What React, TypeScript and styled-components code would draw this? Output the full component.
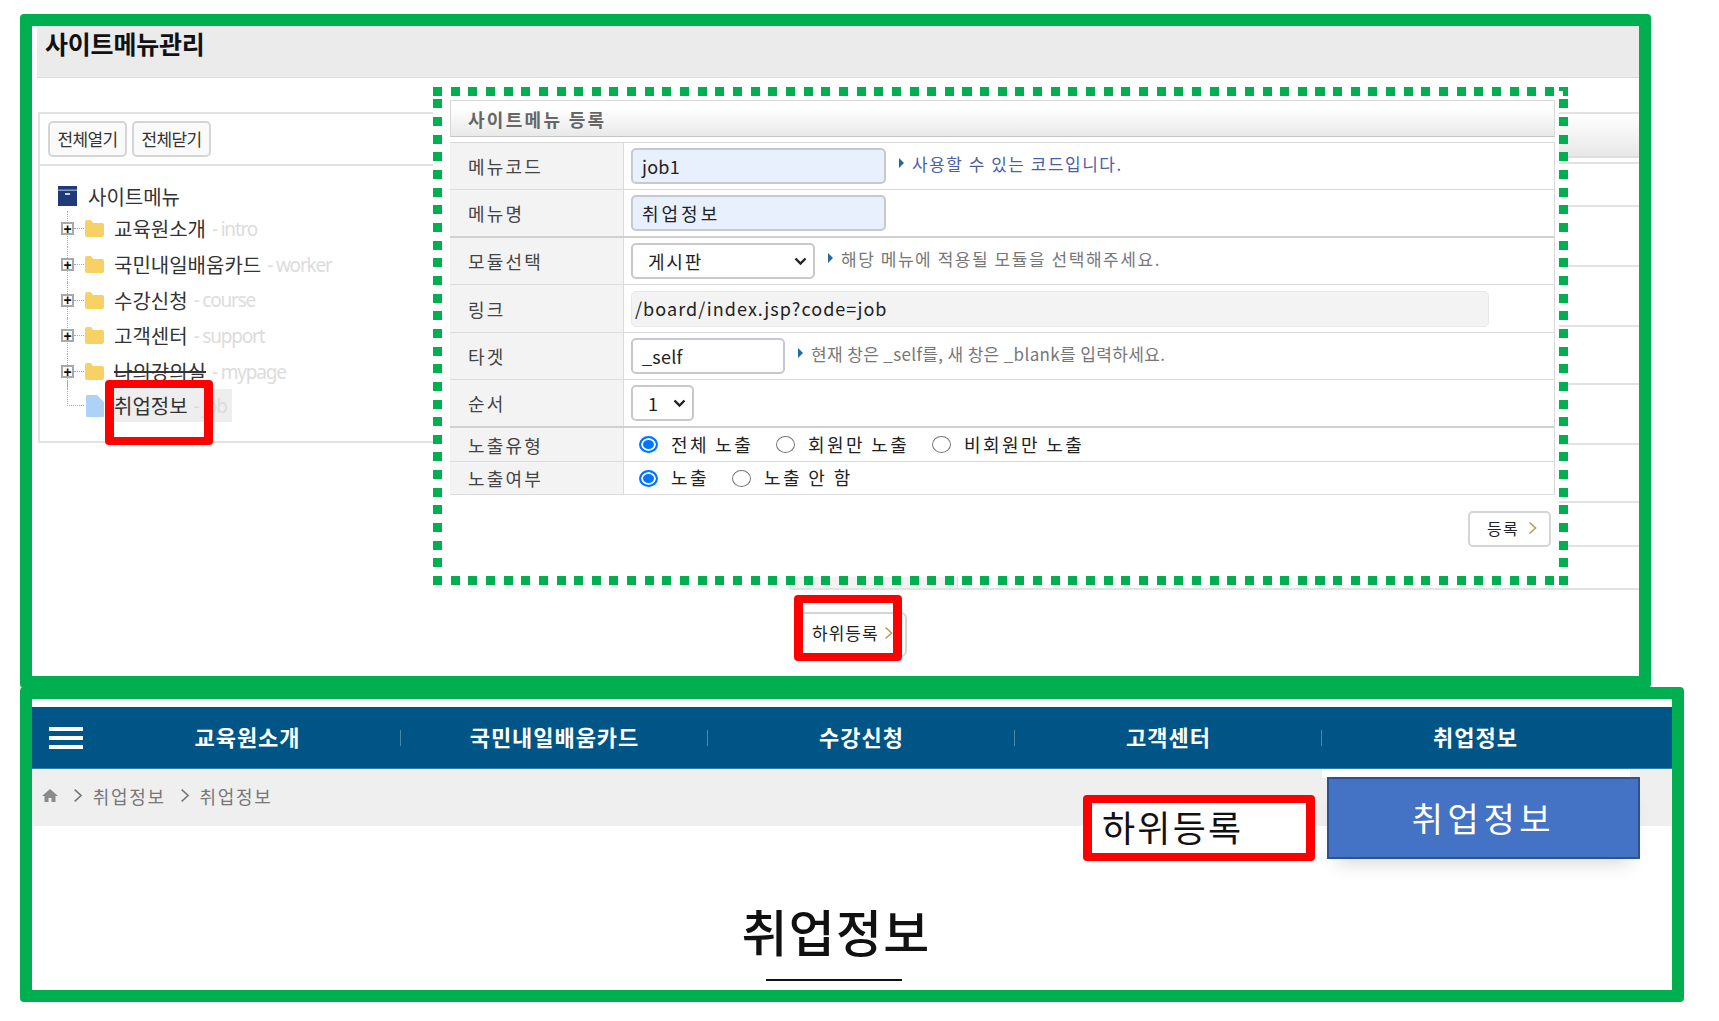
import styled, { createGlobalStyle } from "styled-components";

const GREEN = "#00b050";
const KO = `"Noto Sans CJK KR", "Noto Sans", sans-serif`;

const GlobalStyle = createGlobalStyle`
    html, body {
        margin: 0;
        padding: 0;
        background: #fff;
        font-family: ${KO};
    }
    * { box-sizing: border-box; }
`;

type TreeItem = { name: string; code: string; struck?: boolean };

const treeItems: TreeItem[] = [
    { name: "교육원소개", code: "intro" },
    { name: "국민내일배움카드", code: "worker" },
    { name: "수강신청", code: "course" },
    { name: "고객센터", code: "support" },
    { name: "나의강의실", code: "mypage", struck: true },
];

const navItems = ["교육원소개", "국민내일배움카드", "수강신청", "고객센터", "취업정보"];

const Chevron = ({ color = "#b59a55", size = 14 }: { color?: string; size?: number }) => (
    <svg width={size * 0.65} height={size} viewBox="0 0 9 14" fill="none">
        <path d="M1.5 1.5 L7.5 7 L1.5 12.5" stroke={color} strokeWidth="1.5" />
    </svg>
);

const SelectArrow = () => (
    <svg width="13" height="9" viewBox="0 0 13 9" fill="none">
        <path d="M1.5 1.5 L6.5 6.5 L11.5 1.5" stroke="#222" strokeWidth="2.4" />
    </svg>
);

const FolderIcon = () => (
    <svg width="19" height="17" viewBox="0 0 19 17">
        <path d="M0 2 Q0 0 2 0 H6 L8 3 H17 Q19 3 19 5 V15 Q19 17 17 17 H2 Q0 17 0 15 Z" fill="#f7d163" />
    </svg>
);

const PageIcon = () => (
    <svg width="18" height="22" viewBox="0 0 18 22">
        <path d="M0 1 Q0 0 1 0 H11 L18 7 V21 Q18 22 17 22 H1 Q0 22 0 21 Z" fill="#aed2f7" />
    </svg>
);

const ArchiveIcon = () => (
    <svg width="19" height="20" viewBox="0 0 19 20">
        <rect x="0" y="0" width="19" height="20" fill="#1f3a78" />
        <rect x="0" y="3.5" width="19" height="1.4" fill="#8fa1c6" />
        <rect x="7" y="7" width="5" height="2" fill="#c9d2e6" />
    </svg>
);

const HomeIcon = () => (
    <svg width="16" height="13" viewBox="0 0 16 13">
        <path d="M8 0 L16 7 H13.5 V13 H9.5 V9 H6.5 V13 H2.5 V7 H0 Z" fill="#8b8b8b" />
    </svg>
);

const Radio = ({ on }: { on?: boolean }) => <RadioMark $on={on} />;

const App = () => {
    return (
        <Page>
            <GlobalStyle />
            <AdminFrame>
                <PageHead>
                    <PageTitle>사이트메뉴관리</PageTitle>
                </PageHead>

                <Workspace>
                    <TreePanel>
                        <TreeToolbar>
                            <ToolButton>전체열기</ToolButton>
                            <ToolButton>전체닫기</ToolButton>
                        </TreeToolbar>
                        <TreeBody>
                            <TreeRoot>
                                <ArchiveIcon />
                                <RootName>사이트메뉴</RootName>
                            </TreeRoot>
                            {treeItems.map((item) => (
                                <TreeRow key={item.code}>
                                    <Expander>+</Expander>
                                    <Dots />
                                    <FolderIcon />
                                    <TreeName $struck={item.struck}>{item.name}</TreeName>
                                    <TreeCode>- {item.code}</TreeCode>
                                </TreeRow>
                            ))}
                            <TreeLeaf>
                                <LeafDots />
                                <PageIcon />
                                <LeafLabel>
                                    <TreeName>취업정보</TreeName>
                                    <TreeCode>- job</TreeCode>
                                </LeafLabel>
                            </TreeLeaf>
                        </TreeBody>
                    </TreePanel>

                    <DetailPanel>
                        <DetailHead />
                        <DetailRow $h={6} />
                        <DetailRow $h={43} />
                        <DetailRow $h={60} />
                        <DetailRow $h={60} />
                        <DetailRow $h={58} />
                        <DetailRow $h={60} />
                        <DetailRow $h={58} />
                        <DetailRow $h={44} />
                        <DetailRow $h={43}>
                            <DetailLabel>노출여부</DetailLabel>
                            <DetailValue>
                                <Radio on />
                                <RadioText>노출</RadioText>
                                <Radio />
                                <RadioText>노출 안 함</RadioText>
                            </DetailValue>
                        </DetailRow>
                    </DetailPanel>
                </Workspace>

                <LowerActions>
                    <ActionButton>
                        하위등록 <Chevron />
                    </ActionButton>
                </LowerActions>

                <FormOverlay>
                    <DashEdge />
                    <FormHead>사이트메뉴 등록</FormHead>
                    <FormTable>
                        <FormRow $h={47}>
                            <FormLabel>메뉴코드</FormLabel>
                            <FormCell>
                                <TextBox $w={255} $filled>job1</TextBox>
                                <Hint $blue $ls={1.5}>사용할 수 있는 코드입니다.</Hint>
                            </FormCell>
                        </FormRow>
                        <FormRow $h={48} $thick>
                            <FormLabel>메뉴명</FormLabel>
                            <FormCell>
                                <TextBox $w={255} $filled $ls={3}>취업정보</TextBox>
                            </FormCell>
                        </FormRow>
                        <FormRow $h={47}>
                            <FormLabel>모듈선택</FormLabel>
                            <FormCell>
                                <SelectBox $w={184} $ls={1.8}>
                                    게시판
                                    <SelectArrow />
                                </SelectBox>
                                <Hint $ls={1.55}>해당 메뉴에 적용될 모듈을 선택해주세요.</Hint>
                            </FormCell>
                        </FormRow>
                        <FormRow $h={48}>
                            <FormLabel>링크</FormLabel>
                            <FormCell>
                                <TextBox $w={858} $muted $ls={1.05}>/board/index.jsp?code=job</TextBox>
                            </FormCell>
                        </FormRow>
                        <FormRow $h={47}>
                            <FormLabel>타겟</FormLabel>
                            <FormCell>
                                <TextBox $w={154}>_self</TextBox>
                                <Hint $ls={0.35}>현재 창은 _self를, 새 창은 _blank를 입력하세요.</Hint>
                            </FormCell>
                        </FormRow>
                        <FormRow $h={48} $thick>
                            <FormLabel>순서</FormLabel>
                            <FormCell>
                                <SelectBox $w={63}>
                                    1
                                    <SelectArrow />
                                </SelectBox>
                            </FormCell>
                        </FormRow>
                        <FormRow $h={34}>
                            <FormLabel>노출유형</FormLabel>
                            <FormCell>
                                <RadioGroup>
                                    <Radio on />
                                    <RadioText $w={105}>전체 노출</RadioText>
                                    <Radio />
                                    <RadioText $w={124}>회원만 노출</RadioText>
                                    <Radio />
                                    <RadioText>비회원만 노출</RadioText>
                                </RadioGroup>
                            </FormCell>
                        </FormRow>
                        <FormRow $h={33}>
                            <FormLabel>노출여부</FormLabel>
                            <FormCell>
                                <RadioGroup>
                                    <Radio on />
                                    <RadioText $w={61}>노출</RadioText>
                                    <Radio />
                                    <RadioText>노출 안 함</RadioText>
                                </RadioGroup>
                            </FormCell>
                        </FormRow>
                    </FormTable>
                    <FormActions>
                        <SubmitButton>
                            등록 <Chevron />
                        </SubmitButton>
                    </FormActions>
                </FormOverlay>

                <RedMarker $left={73} $top={354} $w={108} $h={65} />
                <RedMarker $left={762} $top={569} $w={108} $h={66} />
            </AdminFrame>

            <SiteFrame>
                <NavBar>
                    <Burger>
                        <span />
                        <span />
                        <span />
                    </Burger>
                    {navItems.map((name) => (
                        <NavItem key={name}>
                            <NavText>{name}</NavText>
                        </NavItem>
                    ))}
                </NavBar>
                <Breadcrumb>
                    <HomeIcon />
                    <Crumb>
                        <Chevron color="#777" size={15} />
                        취업정보
                    </Crumb>
                    <Crumb>
                        <Chevron color="#777" size={15} />
                        취업정보
                    </Crumb>
                </Breadcrumb>
                <Heading>취업정보</Heading>
                <HeadingLine />

                <SubMenuStrip />
                <SubMenuBox>취업정보</SubMenuBox>
                <AddLabel>하위등록</AddLabel>
            </SiteFrame>
        </Page>
    );
};
export default App;

const Page = styled.div`
    width: 1719px;
    height: 1021px;
    padding: 14px 0 0 20px;
    overflow: hidden;
`;

const AdminFrame = styled.section`
    position: relative;
    width: 1631px;
    height: 674px;
    border: 12px solid ${GREEN};
    border-radius: 4px;
`;

const PageHead = styled.header`
    margin-left: 5px;
    height: 52px;
    padding: 2px 0 0 8px;
    background: #ebebeb;
    border-bottom: 1px solid #ddd;
`;

const PageTitle = styled.h1`
    margin: 0;
    font-size: 25px;
    line-height: 30px;
    font-weight: 700;
    letter-spacing: -0.2px;
    color: #111;
`;

const Workspace = styled.div`
    display: flex;
    margin-top: 34px;
    padding-left: 6px;
    align-items: flex-start;
`;

const TreePanel = styled.div`
    width: 742px;
    height: 331px;
    border: 2px solid #e2e2e2;
    border-right: 0;
`;

const TreeToolbar = styled.div`
    display: flex;
    gap: 5px;
    height: 52px;
    padding: 7px 8px 0;
    border-bottom: 2px solid #e2e2e2;
`;

const ToolButton = styled.button`
    width: 79px;
    height: 36px;
    padding: 0 0 2px;
    background: #fafafa;
    border: 2px solid #d5d5d5;
    border-radius: 5px;
    font-family: ${KO};
    font-size: 17px;
    letter-spacing: -0.7px;
    color: #333;
`;

const TreeBody = styled.div`
    position: relative;
    padding: 18px 0 0 20px;
`;

const TreeRoot = styled.div`
    display: flex;
    align-items: center;
    height: 24px;
    margin: 0 0 3px -2px;
`;

const RootName = styled.span`
    margin-left: 11px;
    font-size: 20px;
    letter-spacing: 0;
    color: #333;
`;

const TreeRow = styled.div`
    position: relative;
    display: flex;
    align-items: center;
    height: 35.7px;
    &::before {
        content: "";
        position: absolute;
        left: 7px;
        top: 0;
        bottom: 0;
        border-left: 1px dotted #aaa;
    }
`;

const Expander = styled.span`
    position: relative;
    z-index: 1;
    display: flex;
    align-items: center;
    justify-content: center;
    width: 13px;
    height: 13px;
    margin-left: 1px;
    border: 2px solid #a8a8a8;
    background: #fff;
    font-family: "Liberation Sans", sans-serif;
    font-size: 14px;
    font-weight: 700;
    line-height: 1;
    color: #111;
`;

const Dots = styled.span`
    width: 10px;
    margin-right: 1px;
    border-top: 1px dotted #aaa;
`;

const TreeName = styled.span<{ $struck?: boolean }>`
    margin-left: 10px;
    font-size: 20px;
    letter-spacing: 0;
    color: #333;
    text-decoration: ${(p) => (p.$struck ? "line-through" : "none")};
`;

const TreeCode = styled.span`
    margin-left: 6px;
    font-family: "Noto Sans", sans-serif;
    font-size: 19px;
    letter-spacing: -1.2px;
    color: #dcdcdc;
`;

const TreeLeaf = styled.div`
    position: relative;
    display: flex;
    align-items: center;
    height: 33px;
    padding-left: 26px;
`;

const LeafDots = styled.span`
    position: absolute;
    left: 7px;
    top: -8px;
    width: 17px;
    height: 25px;
    border-left: 1px dotted #aaa;
    border-bottom: 1px dotted #aaa;
`;

const LeafLabel = styled.span`
    display: flex;
    align-items: center;
    width: 118px;
    height: 33px;
    margin-left: 10px;
    background: #eee;
    ${TreeName} {
        margin-left: 0;
    }
`;

const DetailPanel = styled.div`
    width: 849px;
    margin-left: 10px;
`;

const DetailHead = styled.div`
    height: 46px;
    background: linear-gradient(#ffffff, #e8e8e8);
    border-top: 2px solid #e2e2e2;
    border-bottom: 2px solid #ddd;
`;

const DetailRow = styled.div<{ $h: number }>`
    display: flex;
    height: ${(p) => p.$h}px;
    border-bottom: 2px solid #e2e2e2;
`;

const DetailLabel = styled.div`
    width: 168px;
    padding-left: 18px;
    background: #f3f3f3;
    border-right: 1px solid #ddd;
    border-left: 1px solid #ddd;
    font-size: 17px;
    line-height: 41px;
    color: #444;
`;

const DetailValue = styled.div`
    display: flex;
    align-items: center;
    padding-left: 13px;
    gap: 13px;
`;

const LowerActions = styled.div`
    position: relative;
    z-index: 3;
    display: flex;
    margin: 22px 0 0 762px;
`;

const ActionButton = styled.button`
    display: flex;
    align-items: center;
    gap: 5px;
    width: 113px;
    height: 45px;
    padding: 0 0 4px 16px;
    background: #fff;
    border: 2px solid #d5d5d5;
    border-radius: 6px;
    font-family: ${KO};
    font-size: 17px;
    letter-spacing: 1px;
    color: #222;
`;

const FormOverlay = styled.div`
    position: absolute;
    z-index: 2;
    left: 401px;
    top: 61px;
    width: 1126px;
    height: 490px;
    padding: 13px 4px 0 17px;
    background: #fff;
`;

const DashEdge = styled.div`
    position: absolute;
    left: 0;
    top: 0;
    width: 1135px;
    height: 498px;
    pointer-events: none;
    background:
        repeating-linear-gradient(90deg, ${GREEN} 0 9px, transparent 9px 17.65px) 0 0 / 100% 9px no-repeat,
        repeating-linear-gradient(90deg, ${GREEN} 0 9px, transparent 9px 17.65px) 0 100% / 100% 9px no-repeat,
        repeating-linear-gradient(0deg, ${GREEN} 0 9px, transparent 9px 17.65px) 0 0 / 9px 100% no-repeat,
        repeating-linear-gradient(0deg, ${GREEN} 0 9px, transparent 9px 17.65px) 100% 0 / 9px 100% no-repeat;
`;

const FormHead = styled.div`
    height: 37px;
    padding-left: 17px;
    background: linear-gradient(#ffffff 20%, #e9e9e9);
    border: 1px solid #d8d8d8;
    border-bottom-color: #c4c4c4;
    font-size: 18px;
    font-weight: 700;
    line-height: 37px;
    letter-spacing: 2.3px;
    color: #666;
`;

const FormTable = styled.div`
    margin-top: 5px;
    border-top: 1px solid #d8d8d8;
    border-right: 1px solid #d8d8d8;
`;

const FormRow = styled.div<{ $h: number; $thick?: boolean }>`
    display: flex;
    height: ${(p) => p.$h}px;
    border-bottom: ${(p) => (p.$thick ? "2px solid #d0d0d0" : "1px solid #dcdcdc")};
`;

const FormLabel = styled.div`
    display: flex;
    align-items: center;
    width: 174px;
    padding-left: 18px;
    background: #f3f3f3;
    border-right: 1px solid #dcdcdc;
    font-size: 18px;
    letter-spacing: 2.2px;
    color: #444;
`;

const FormCell = styled.div`
    flex: 1;
    display: flex;
    align-items: center;
    padding-left: 7px;
`;

const TextBox = styled.div<{ $w: number; $filled?: boolean; $muted?: boolean; $ls?: number }>`
    display: flex;
    align-items: center;
    width: ${(p) => p.$w}px;
    height: 36px;
    padding: 0 0 ${(p) => (p.$muted ? 2 : 0)}px ${(p) => (p.$muted ? 3 : 9)}px;
    background: ${(p) => (p.$filled ? "#e8f0fe" : p.$muted ? "#f3f3f3" : "#fff")};
    border: ${(p) => (p.$muted ? "1px solid #e8e8e8" : "2px solid #c6c9cf")};
    border-radius: 5px;
    font-size: 18px;
    letter-spacing: ${(p) => p.$ls ?? 0.25}px;
    color: #222;
`;

const SelectBox = styled.div<{ $w: number; $ls?: number }>`
    display: flex;
    align-items: center;
    justify-content: space-between;
    width: ${(p) => p.$w}px;
    height: 36px;
    padding: 0 6px 0 15px;
    background: #fff;
    border: 2px solid #c9c9c9;
    border-radius: 5px;
    font-size: 18px;
    letter-spacing: ${(p) => p.$ls ?? 0}px;
    color: #222;
`;

const Hint = styled.span<{ $blue?: boolean; $ls: number }>`
    position: relative;
    margin-left: 26px;
    font-size: 17px;
    letter-spacing: ${(p) => p.$ls}px;
    line-height: 1;
    transform: translateY(-3px);
    color: ${(p) => (p.$blue ? "#4b5fa5" : "#777")};
    &::before {
        content: "";
        position: absolute;
        left: -13px;
        top: 3px;
        border-left: 5px solid #1f6aa5;
        border-top: 5px solid transparent;
        border-bottom: 5px solid transparent;
    }
`;

const RadioGroup = styled.div`
    display: flex;
    align-items: center;
    padding-left: 8px;
`;

const RadioMark = styled.span<{ $on?: boolean }>`
    flex: none;
    width: 19px;
    height: 17px;
    border-radius: 50%;
    border: ${(p) => (p.$on ? "2px solid #0075ff" : "1.5px solid #767676")};
    background: ${(p) => (p.$on ? "#0075ff" : "#fff")};
    box-shadow: ${(p) => (p.$on ? "inset 0 0 0 2px #fff" : "none")};
`;

const RadioText = styled.span<{ $w?: number }>`
    width: ${(p) => (p.$w ? `${p.$w}px` : "auto")};
    margin: 0 0 2px 13px;
    font-size: 18px;
    line-height: 1;
    letter-spacing: 2.4px;
    color: #222;
`;

const FormActions = styled.div`
    display: flex;
    justify-content: flex-end;
    padding: 16px 4px 0 0;
`;

const SubmitButton = styled.button`
    display: flex;
    align-items: center;
    gap: 9px;
    width: 83px;
    height: 36px;
    padding: 0 0 2px 17px;
    background: #fff;
    border: 2px solid #d5d5d5;
    border-radius: 5px;
    font-family: ${KO};
    font-size: 16px;
    letter-spacing: 1.4px;
    color: #222;
`;

const RedMarker = styled.div<{ $left: number; $top: number; $w: number; $h: number }>`
    position: absolute;
    z-index: 4;
    left: ${(p) => p.$left}px;
    top: ${(p) => p.$top}px;
    width: ${(p) => p.$w}px;
    height: ${(p) => p.$h}px;
    border: 8px solid #ff0000;
    border-width: 8px 9px;
    border-radius: 4px;
`;

const SiteFrame = styled.section`
    position: relative;
    width: 1664px;
    height: 315px;
    margin-top: -1px;
    padding-top: 8px;
    border: 12px solid ${GREEN};
    border-radius: 4px;
`;

const NavBar = styled.nav`
    display: flex;
    align-items: center;
    height: 62px;
    background: #005587;
    border-bottom: 1px solid #2d7ba8;
`;

const Burger = styled.div`
    display: flex;
    flex-direction: column;
    gap: 5px;
    width: 62px;
    padding-left: 17px;
    span {
        width: 34px;
        height: 4px;
        background: #fff;
    }
`;

const NavItem = styled.div`
    position: relative;
    flex: none;
    width: 307px;
    text-align: center;
    &:not(:last-child)::after {
        content: "";
        position: absolute;
        right: 0;
        top: 50%;
        height: 16px;
        margin-top: -8px;
        border-right: 1px solid #4d86a8;
    }
`;

const NavText = styled.span`
    display: block;
    margin-top: -3px;
    font-size: 22px;
    font-weight: 700;
    line-height: 30px;
    letter-spacing: 0.95px;
    color: #fff;
`;

const Breadcrumb = styled.div`
    display: flex;
    align-items: center;
    height: 57px;
    padding: 0 0 4px 10px;
    background: #efefef;
`;

const Crumb = styled.span`
    display: inline-flex;
    align-items: center;
    gap: 10px;
    margin-left: 15px;
    font-size: 18px;
    letter-spacing: 1.7px;
    color: #777;
    & + & {
        margin-left: 14px;
    }
`;

const Heading = styled.h2`
    margin: 73px 0 0;
    padding-right: 32px;
    font-size: 50px;
    font-weight: 500;
    line-height: 62px;
    letter-spacing: 1.3px;
    text-align: center;
    color: #111;
`;

const HeadingLine = styled.div`
    width: 136px;
    height: 2px;
    margin: 18px 0 0 734px;
    background: #111;
`;

const SubMenuStrip = styled.div`
    position: absolute;
    left: 1290px;
    top: 70px;
    width: 308px;
    height: 9px;
    background: #fff;
`;

const SubMenuBox = styled.div`
    position: absolute;
    left: 1295px;
    top: 78px;
    display: flex;
    align-items: center;
    justify-content: center;
    width: 313px;
    height: 82px;
    padding-bottom: 2px;
    background: #4472c4;
    border: 2px solid #2f528f;
    box-shadow: 0 14px 18px -10px rgba(0, 0, 0, 0.16);
    font-size: 34px;
    letter-spacing: 4.6px;
    color: #fff;
`;

const AddLabel = styled.div`
    position: absolute;
    left: 1051px;
    top: 96px;
    display: flex;
    align-items: center;
    width: 232px;
    height: 66px;
    padding: 0 0 4px 10px;
    background: #fff;
    border: 8px solid #ff0000;
    border-width: 8px 9px;
    border-radius: 4px;
    font-size: 36px;
    letter-spacing: 2.2px;
    color: #111;
`;
